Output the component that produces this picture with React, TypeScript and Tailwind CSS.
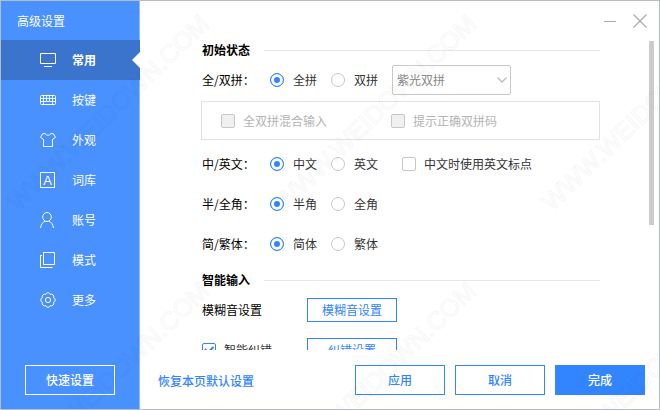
import { useState, type ReactNode } from "react";

const WATERMARK = "WWW.WEIDOWN.COM";

function Icon({ children }: { children: ReactNode }) {
  return (
    <svg viewBox="0 0 16 16" className="size-4 shrink-0" fill="none" stroke="currentColor" aria-hidden="true">
      {children}
    </svg>
  );
}

const MonitorIcon = (
  <Icon>
    <path d="M.5 1.5h15v10H.5zM4 14.5h8" />
  </Icon>
);

const KeyboardIcon = (
  <Icon>
    <rect x=".5" y="3.5" width="15" height="9" rx="1" />
    <path d="M1 6.5h14M1 9.5h14M3.500 4v8.500M6.500 4v5.500M9.500 4v5.500M12.500 4v8.500" strokeOpacity=".85" />
  </Icon>
);

const ShirtIcon = (
  <Icon>
    <path
      d="M5.200 1.500C6 3.800 10 3.800 10.800 1.500L13.200 1.700 15.500 5.300 12.500 7.300V14.500h-9V7.300L.5 5.300 2.800 1.700Z"
      strokeLinejoin="round"
    />
  </Icon>
);

const LexiconIcon = (
  <span className="mr-px flex h-4 w-[15px] shrink-0 items-center justify-center border border-white font-['Liberation_Sans',sans-serif] text-[13px] leading-none font-normal">
    A
  </span>
);

const UserIcon = (
  <Icon>
    <ellipse cx="7" cy="5" rx="4.300" ry="4.500" />
    <path d="M.6 16c.2-3.400 1.900-5.600 4.400-6.900M13.400 16c-.2-3.400-1.900-5.600-4.400-6.900" />
  </Icon>
);

const PagesIcon = (
  <Icon>
    <path d="M3.500.5h11v12h-11zM.5 3v12.500H12.500M.5 3.500H2" />
  </Icon>
);

const GearIcon = (
  <Icon>
    <circle cx="8" cy="8" r="2.600" />
    <path
      d="M5.700 2.460A2.400 2.400 0 0 1 10.300 2.460A2.400 2.400 0 0 1 13.540 5.700A2.400 2.400 0 0 1 13.540 10.300A2.400 2.400 0 0 1 10.300 13.540A2.400 2.400 0 0 1 5.700 13.540A2.400 2.400 0 0 1 2.460 10.300A2.400 2.400 0 0 1 2.460 5.700A2.400 2.400 0 0 1 5.700 2.460Z"
      strokeLinejoin="round"
    />
  </Icon>
);

const NAV = [
  { label: "常用", icon: MonitorIcon },
  { label: "按键", icon: KeyboardIcon },
  { label: "外观", icon: ShirtIcon },
  { label: "词库", icon: LexiconIcon },
  { label: "账号", icon: UserIcon },
  { label: "模式", icon: PagesIcon },
  { label: "更多", icon: GearIcon },
];

function Sidebar() {
  const [active, setActive] = useState("常用");
  return (
    <aside className="flex w-[139px] shrink-0 flex-col border-r border-[#8dbbff] bg-[#4891ff] text-white">
      <h1 className="flex h-[39px] items-center pl-4">高级设置</h1>
      <nav className="-mr-px flex-1">
        {NAV.map(({ label, icon }) => (
          <button
            key={label}
            type="button"
            onClick={() => setActive(label)}
            className={`relative flex h-10 w-full items-center gap-4 pl-[39px] ${
              active === label ? "bg-[#3b74cc] font-bold" : ""
            }`}
          >
            {icon}
            {label}
            {active === label && (
              <svg viewBox="0 0 8 16" className="absolute top-3 right-0 h-4 w-2" aria-hidden="true">
                <path d="M8 0v16L0 8z" fill="#fff" />
              </svg>
            )}
          </button>
        ))}
      </nav>
      <div className="pb-[14px] pl-6">
        <button type="button" className="h-[30px] w-[90px] border border-white font-medium">
          快速设置
        </button>
      </div>
    </aside>
  );
}

function SectionTitle({ children }: { children: ReactNode }) {
  return (
    <div className="flex h-5 items-center gap-[14px]">
      <h2 className="font-bold text-black">{children}</h2>
      <span className="h-px flex-1 bg-[#e6e6e6]" />
    </div>
  );
}

function Radio({ name, label, checked }: { name: string; label: string; checked?: boolean }) {
  return (
    <label className="flex w-[61px] items-center gap-[9px]">
      <input
        type="radio"
        name={name}
        defaultChecked={checked}
        className="size-[14px] shrink-0 appearance-none rounded-full border border-[#c8c8c8] bg-white checked:border-[#3385ff] checked:bg-[#3385ff] checked:shadow-[inset_0_0_0_3px_white]"
      />
      {label}
    </label>
  );
}

function Checkbox({ label, checked, disabled }: { label: string; checked?: boolean; disabled?: boolean }) {
  return (
    <label className={`flex items-center gap-2 ${disabled ? "text-[#b4b4b4]" : ""}`}>
      <span className="grid shrink-0">
        <input
          type="checkbox"
          defaultChecked={checked}
          disabled={disabled}
          className="peer col-start-1 row-start-1 size-[14px] appearance-none rounded-xs border border-[#c8c8c8] bg-white checked:border-[#3385ff] disabled:bg-[#f0f0f0]"
        />
        <svg
          viewBox="0 0 14 14"
          className="pointer-events-none invisible col-start-1 row-start-1 size-[14px] peer-checked:visible"
          fill="none"
          stroke="#3385ff"
          strokeWidth="2"
          aria-hidden="true"
        >
          <path d="m3 6 3 3.500L11.500 4" />
        </svg>
      </span>
      {label}
    </label>
  );
}

function RadioRow({
  name,
  title,
  options,
  children,
}: {
  name: string;
  title: string;
  options: [string, string];
  children?: ReactNode;
}) {
  return (
    <div role="radiogroup" aria-label={title} className="flex h-10 items-center">
      <span className="w-[68px] text-black">{title}：</span>
      <Radio name={name} label={options[0]} checked />
      <Radio name={name} label={options[1]} />
      {children}
    </div>
  );
}

const outlineButton = "w-[90px] border border-[#3385ff] bg-white text-[#3385ff]";

function Settings() {
  return (
    <div className="min-w-0 flex-1 overflow-hidden pr-[54px] pl-[62px]">
      <SectionTitle>初始状态</SectionTitle>
      <RadioRow name="pinyin" title="全/双拼" options={["全拼", "双拼"]}>
        <div className="grid w-[119px] items-center">
          <select
            aria-label="双拼方案"
            disabled
            className="col-start-1 row-start-1 h-[30px] appearance-none rounded-xs border border-[#c8c8c8] bg-white px-1 text-[#888]"
          >
            <option>紫光双拼</option>
          </select>
          <svg
            viewBox="0 0 10 6"
            className="pointer-events-none col-start-1 row-start-1 mr-1 h-[6px] w-[10px] justify-self-end"
            fill="none"
            stroke="#bbb"
            strokeWidth="1.300"
            aria-hidden="true"
          >
            <path d="m.5.5 4.500 4.500L9.500.5" />
          </svg>
        </div>
      </RadioRow>
      <div className="mt-px mb-1 -ml-px grid h-[39px] grid-cols-[170px_1fr] items-center border border-[#e2e2e2] pt-px pl-[19px]">
        <Checkbox label="全双拼混合输入" disabled />
        <Checkbox label="提示正确双拼码" disabled />
      </div>
      <RadioRow name="language" title="中/英文" options={["中文", "英文"]}>
        <div className="pl-[10px]">
          <Checkbox label="中文时使用英文标点" />
        </div>
      </RadioRow>
      <RadioRow name="width" title="半/全角" options={["半角", "全角"]} />
      <RadioRow name="script" title="简/繁体" options={["简体", "繁体"]} />
      <div className="mt-[6px]">
        <SectionTitle>智能输入</SectionTitle>
      </div>
      <div className="grid grid-cols-[105px_1fr] items-center">
        <span className="text-black">模糊音设置</span>
        <div className="flex h-10 items-center">
          <button type="button" className={`h-6 ${outlineButton}`}>
            模糊音设置
          </button>
        </div>
        <Checkbox label="智能纠错" checked />
        <div className="flex h-10 items-center">
          <button type="button" className={`h-6 ${outlineButton}`}>
            纠错设置
          </button>
        </div>
      </div>
    </div>
  );
}

function Watermark() {
  return (
    <svg className="pointer-events-none absolute inset-0 size-full" aria-hidden="true">
      <defs>
        <pattern id="mark" width="267" height="267" patternUnits="userSpaceOnUse" x="3" y="-52">
          <text
            transform="translate(14 263) rotate(-44)"
            className="font-['Liberation_Sans',sans-serif] text-[25px]"
            fill="none"
            stroke="#000"
            strokeOpacity=".035"
          >
            {WATERMARK}
          </text>
        </pattern>
      </defs>
      <rect width="100%" height="100%" fill="url(#mark)" />
    </svg>
  );
}

export default function App() {
  return (
    <div className="relative flex h-screen overflow-hidden border border-[#b4bcc8] bg-white font-['Noto_Sans_CJK_SC',sans-serif] text-xs text-[#333]">
      <Sidebar />
      <main className="flex min-w-0 flex-1 flex-col">
        <header className="flex h-[39px] shrink-0 items-center justify-end gap-4 pr-3 text-[#aaa]">
          <button type="button" aria-label="最小化">
            <svg viewBox="0 0 14 14" className="size-[14px]" fill="none" stroke="currentColor">
              <path d="M1 7.500h12" />
            </svg>
          </button>
          <button type="button" aria-label="关闭">
            <svg viewBox="0 0 14 14" className="size-[14px]" fill="none" stroke="currentColor" strokeWidth="1.200">
              <path d="m.5.5 13 13M13.500.5l-13 13" />
            </svg>
          </button>
        </header>
        <div className="flex min-h-0 flex-1 pr-[5px]">
          <Settings />
          <div className="-ml-[5px] w-[5px] shrink-0 pt-px">
            <div className="h-[184px] bg-[#ccc]" />
          </div>
        </div>
        <footer className="flex h-[59px] shrink-0 items-start gap-[10px] pt-[15px] pr-[14px] pl-[18px] font-medium">
          <a href="#reset" className="mr-auto pt-2 text-[#3385ff]">
            恢复本页默认设置
          </a>
          <button type="button" className={`h-[30px] ${outlineButton}`}>
            应用
          </button>
          <button type="button" className={`h-[30px] ${outlineButton}`}>
            取消
          </button>
          <button type="button" className="h-[30px] w-[90px] bg-[#3385ff] text-white">
            完成
          </button>
        </footer>
      </main>
      <Watermark />
    </div>
  );
}
